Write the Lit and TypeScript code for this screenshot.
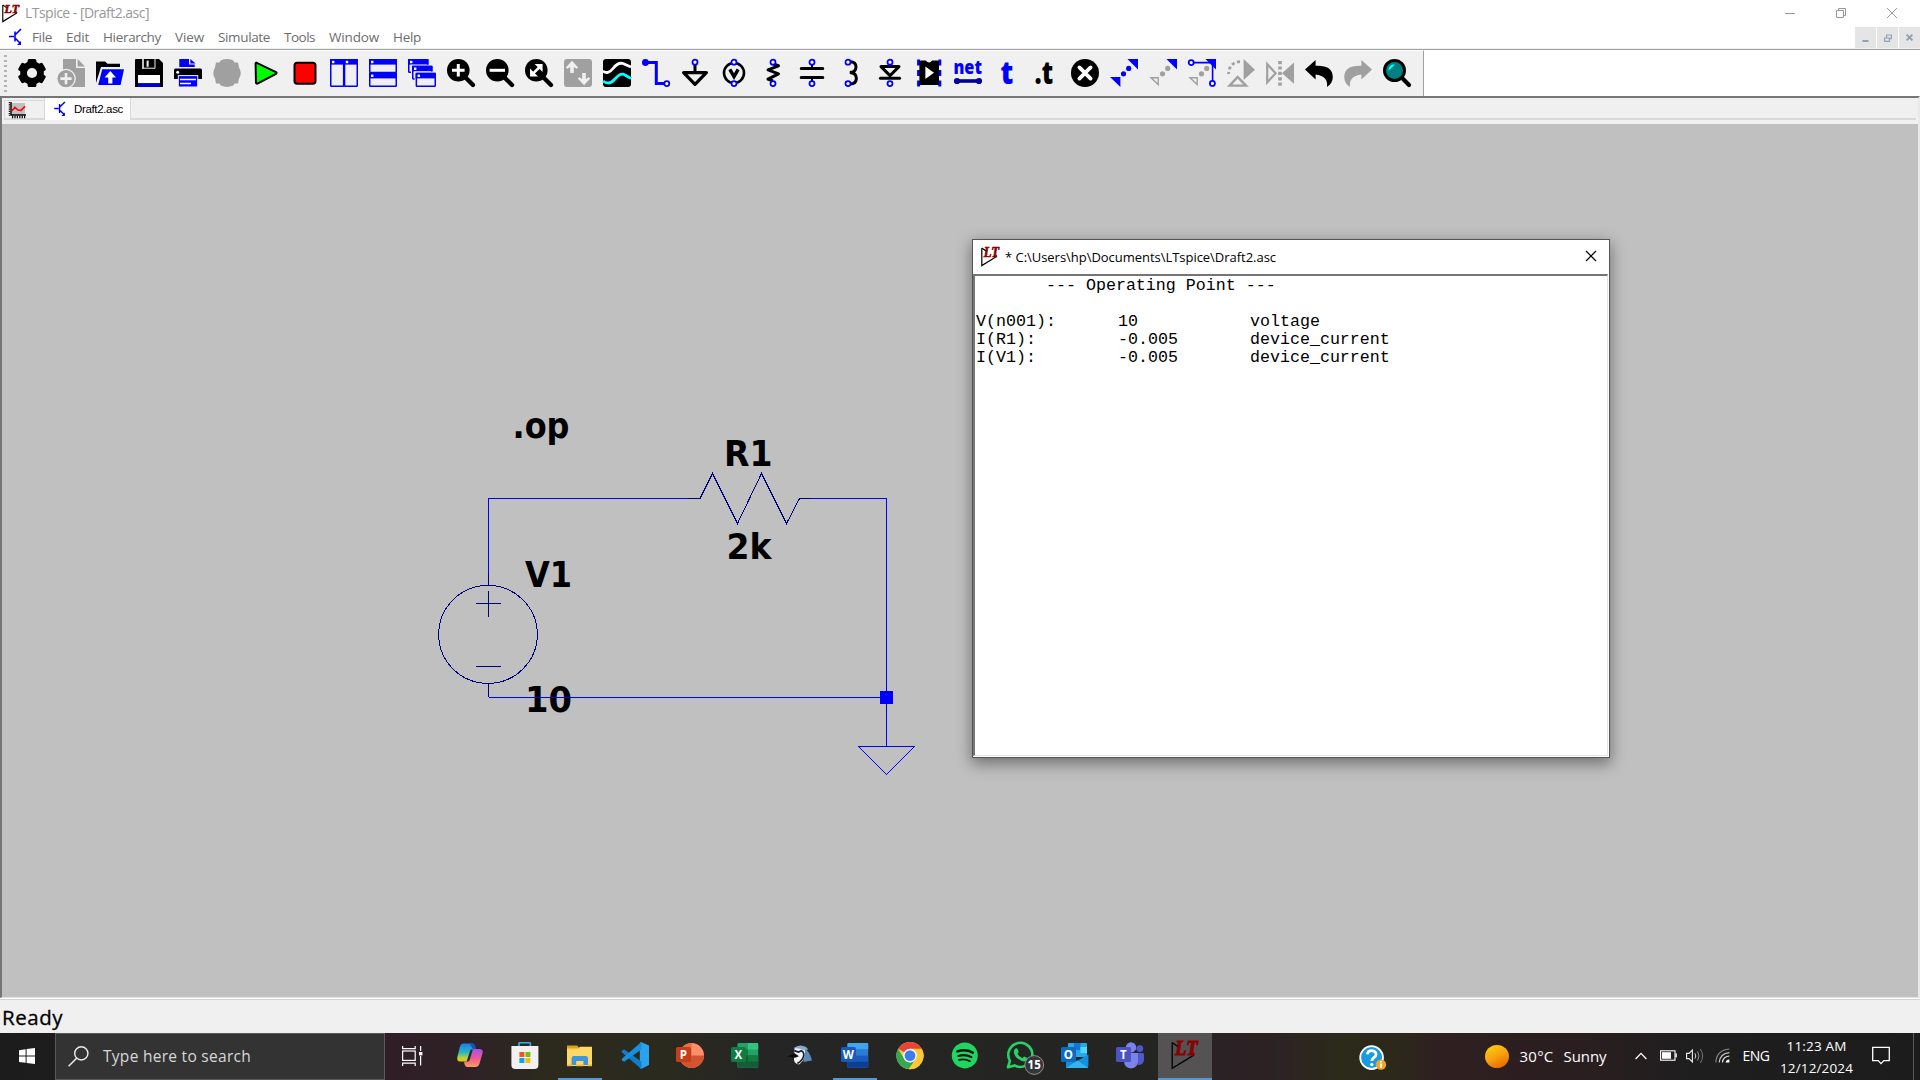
import { LitElement, html, svg, css } from "lit";
import { customElement, property, query } from "lit/decorators.js";

const BG = "#f0f0f0";
const GR = "#a0a0a0";
const BL = "#0000ff";

/** A line of text spread to a given width through letter spacing. */
@customElement("fit-label")
class FitLabel extends LitElement {
  @property() text = "";
  @property({ type: Number }) width = 0;
  @query("span") private span!: HTMLSpanElement;

  static styles = css`
    :host { display: inline-block; white-space: pre; flex: none; }
    span { display: inline-block; }
  `;

  firstUpdated() {
    const natural = this.span.getBoundingClientRect().width;
    const gap = (this.width - natural) / Math.max(1, this.text.length);
    this.span.style.letterSpacing = `${gap}px`;
    this.style.width = `${this.width}px`;
  }

  render() {
    return html`<span>${this.text}</span>`;
  }
}

const label = (text: string, width: number) =>
  html`<fit-label .text=${text} .width=${width}></fit-label>`;

const ring = (x: number, y: number) =>
  svg`<circle cx=${x} cy=${y} r="2.5" fill="#fff" stroke=${BL} stroke-width="1.8"/>`;

const lens = (inner: unknown) => svg`
  <path d="M18 18 L26 26" stroke="#000" stroke-width="4.4" stroke-linecap="round"/>
  <circle cx="11.3" cy="11.3" r="11.3"/>${inner}`;

const win = (x: number, y: number, w: number, h: number) => svg`
  <rect x=${x + 0.75} y=${y + 0.75} width=${w - 1.5} height=${h - 1.5} rx=".6" fill=${BG} stroke=${BL} stroke-width="1.5"/>
  <rect x=${x} y=${y} width=${w} height="5.6" fill=${BL}/>
  <rect x=${x + 2} y=${y + 1.8} width="2.4" height="2.4" fill="#fff"/>`;

const dots = (fill: string) => svg`
  <g fill=${fill}><circle cx="13.5" cy="14.8" r="2.6"/><circle cx="18.7" cy="9.4" r="2.6"/></g>`;

const toolIcons = [
  // control panel
  svg`<g fill="#000"><circle cx="14" cy="14" r="11.8"/>
    <rect x="9.6" y="0" width="8.8" height="28" rx="1.5"/>
    <rect x="9.6" y="0" width="8.8" height="28" rx="1.5" transform="rotate(60 14 14)"/>
    <rect x="9.6" y="0" width="8.8" height="28" rx="1.5" transform="rotate(120 14 14)"/></g>
    <circle cx="14" cy="14" r="5.1" fill=${BG}/>`,
  // new schematic
  svg`<path d="M6 0H19V9H28V28H6Z" fill=${GR}/><path d="M20.6 0L28 7.4H20.6Z" fill=${GR}/>
    <circle cx="9" cy="19.6" r="9.2" fill=${GR} stroke=${BG} stroke-width="1.3"/>
    <path d="M9 14V25.2M3.4 19.6H14.6" stroke=${BG} stroke-width="2.6"/>`,
  // open
  svg`<path d="M0 2.5H9L11.5 4.8H24V8H5L0 24Z" fill="#000"/>
    <path d="M6.2 10.2H28L24.6 26H2.2Z" fill=${BL}/>
    <path d="M14.3 12L20 18.4H16.4V24.4H12.2V18.4H8.6Z" fill="#fff"/>`,
  // save
  svg`<path d="M0 1Q0 0 1 0H24L28 4V28H0Z" fill="#000"/>
    <rect x="7.2" y="0" width="1.6" height="9.6" fill=${BG}/><rect x="11.6" y="1.6" width="2" height="6.2" fill=${BG}/>
    <path d="M7.2 9.2H20V0" fill="none" stroke=${BG} stroke-width="1"/>
    <rect x="3" y="16" width="22" height="8.4" fill="#fff"/><rect x="3" y="24.2" width="22" height="3.8" fill="#0000c8"/>`,
  // print
  svg`<path d="M5.3 0H15V5.4H20.7V8H5.3Z" fill=${BL}/><path d="M16.4 0L21.6 4.6H16.4Z" fill=${BL}/>
    <path d="M1.5 9.5H26.5Q28 9.5 28 11V20H0V11Q0 9.5 1.5 9.5Z" fill="#000"/>
    <circle cx="3.7" cy="13.2" r="1.5" fill="#fff"/>
    <rect x="4.3" y="16.6" width="19.4" height="11.4" fill=${BL} stroke=${BG} stroke-width="1"/>
    <path d="M6 20.4H22M6 24.6H17" stroke="#fff" stroke-width="1.5"/>`,
  // pause
  svg`<path d="M8 1.2Q14-1 20 1.2L21.6 3.4L25 3.6L26 8.4Q29.6 14 26 19.6L25 24.4L21.6 24.6L20 26.8Q14 29 8 26.8L6.4 24.6L3 24.4L2 19.6Q-1.6 14 2 8.4L3 3.6L6.4 3.4Z" fill=${GR}/>`,
  // run
  svg`<path d="M4.2 3.6L24 13.2Q25.2 14 24 14.8L5.4 24.6Q4.2 25 4 23.6L3.6 4.4Z" fill="#0f0" stroke="#000" stroke-width="2" stroke-linejoin="round"/>`,
  // stop
  svg`<rect x="3.5" y="3.7" width="21" height="21" rx="2.8" fill="#f00" stroke="#000" stroke-width="2"/>`,
  svg`${win(0, 0, 14.4, 28)}${win(13.8, 0, 14.2, 28)}`,
  svg`${win(0, 0, 28, 14.3)}${win(0, 13.8, 28, 14.2)}`,
  svg`${win(0, 0, 20.5, 14)}
    <rect x="3" y="5.8" width="22" height="14.6" fill=${BG}/>${win(4, 6.7, 20.5, 14)}
    <rect x="6.6" y="12.6" width="21.4" height="15.4" fill=${BG}/>${win(7.6, 13.8, 20.4, 14.2)}`,
  lens(svg`<path d="M11.3 5V17.6M5 11.3H17.6" stroke="#fff" stroke-width="3"/>`),
  lens(svg`<path d="M3.6 11.3H19" stroke="#fff" stroke-width="3"/>`),
  lens(svg`<path d="M8 14.6L14.6 8" stroke="#fff" stroke-width="2.6"/>
    <path d="M9.6 5H17.6V13ZM5 9.6V17.6H13Z" fill="#fff"/>`),
  // autorange
  svg`<rect width="28" height="28" rx="3" fill=${GR}/>
    <path d="M8 1.8L14.2 8.6L12.6 9.8L9.8 8V14H6.2V8L3.4 9.8L1.8 8.6Z" fill=${BG}/>
    <path d="M20 26.2L26.2 19.4L24.6 18.2L21.8 20V14H18.2V20L15.4 18.2L13.8 19.4Z" fill=${BG}/>`,
  // waveforms
  svg`<rect width="28" height="28" rx="3" fill="#000"/>
    <g fill="none" stroke-width="2.8"><path d="M0 12Q5 16 10 9.5T20 4.5L28 8" stroke="#fff"/>
    <path d="M0 22Q6 27 12 20T22 16L28 19.5" stroke="#0ff"/></g>`,
  // wire
  svg`<path d="M3.5 3.6H14.3V24.5H24" fill="none" stroke=${BL} stroke-width="3"/>
    <circle cx="3.4" cy="3.5" r="3.4" fill=${BL}/>${ring(24.8, 24.6)}`,
  // ground
  svg`<path d="M14 5V13" stroke="#000" stroke-width="3"/>
    <path d="M2.6 13.6H25.4L14 25.4Z" fill="none" stroke="#000" stroke-width="3.2" stroke-linejoin="round"/>${ring(14, 3.2)}`,
  // voltage source
  svg`<circle cx="14" cy="14" r="10" fill="none" stroke="#000" stroke-width="2.6"/>
    <path d="M9.8 10.3L14 17.6L18.2 10.3" fill="none" stroke="#000" stroke-width="3.4"/>${ring(14, 3.2)}${ring(14, 24.6)}`,
  // resistor
  svg`<path d="M14 5L19.5 6.8L9 10.8L19.5 14.8L9 20.2L14 22" fill="none" stroke="#000" stroke-width="3" stroke-linejoin="round"/>${ring(14, 3.2)}${ring(14, 24.6)}`,
  // capacitor
  svg`<path d="M3.2 9.6H24.8M3.2 18.4H24.8" stroke="#000" stroke-width="3" stroke-linecap="round"/>
    <path d="M14 5V9M14 19V23" stroke="#000" stroke-width="2"/>${ring(14, 3.2)}${ring(14, 24.6)}`,
  // inductor
  svg`<path d="M13 2.8Q18.8 2.6 19 8Q18.8 13.4 12.8 13.6Q19.4 14 19.4 19.6Q19 25 13 25" fill="none" stroke="#000" stroke-width="3" stroke-linecap="round"/>${ring(11, 3.2)}${ring(11, 24.6)}`,
  // diode
  svg`<path d="M5 7.6H23L14 16.6Z" fill="none" stroke="#000" stroke-width="3" stroke-linejoin="round"/>
    <path d="M4.4 19.2H23.6" stroke="#000" stroke-width="3" stroke-linecap="round"/>${ring(14, 3.2)}${ring(14, 24.6)}`,
  // component
  svg`<g fill="none" stroke=${BL} stroke-width="3" stroke-dasharray="6 4.5"><path d="M3.6 0.5V28M24.8 0.5V28"/></g>
    <path d="M6 1.5H10.8Q14 5.5 17.2 1.5H22.4Q24 1.5 24 3V26H4.4V3Q4.4 1.5 6 1.5Z" fill="#000"/>
    <path d="M10.4 7.6L19 13.8L10.4 20Z" fill="#fff"/>`,
  // net name
  svg`<text x="-.6" y="15.2" textLength="28.6" lengthAdjust="spacingAndGlyphs" font-family="Open Sans" font-weight="800" font-size="18.5" fill=${BL}>net</text>
    <path d="M3 22H25" stroke="#00009a" stroke-width="3.6"/><circle cx="3" cy="22" r="3.1" fill="#00009a"/><circle cx="25" cy="22" r="3.1" fill="#00009a"/>`,
  svg`<text x="7.4" y="25.4" textLength="12.8" lengthAdjust="spacingAndGlyphs" font-family="Open Sans" font-weight="800" font-size="31" fill=${BL}>t</text>`,
  svg`<text x="2.6" y="25.4" textLength="18.6" lengthAdjust="spacingAndGlyphs" font-family="Open Sans" font-weight="800" font-size="31">.t</text>`,
  // delete
  svg`<circle cx="14" cy="14" r="14"/><path d="M8.4 8.4L19.6 19.6M19.6 8.4L8.4 19.6" stroke="#fff" stroke-width="3.8" stroke-linecap="round"/>`,
  // duplicate
  svg`<path d="M17.4 0H28V10.6ZM0 18H10.4V28Z" fill=${BL}/>${dots(BL)}`,
  // move
  svg`<path d="M17.4 0H28V10.6Z" fill=${BL}/><path d="M2 18.7H9.2V25.6Z" fill="none" stroke=${GR} stroke-width="1.4"/>${dots(GR)}`,
  // drag
  svg`<path d="M17.4 0H28V10.6Z" fill=${BL}/><path d="M2 18.7H9.2V25.6Z" fill="none" stroke=${GR} stroke-width="1.4"/>${dots(GR)}
    <path d="M5 3.6H24.6V22" fill="none" stroke=${BL} stroke-width="1.6"/>${ring(3.2, 3.6)}${ring(24.4, 24.4)}`,
  // rotate
  svg`<path d="M16.6 0L28 10.8L16.6 21Z" fill=${GR}/><path d="M13 2.6Q2 3.4 1.6 15" fill="none" stroke=${GR} stroke-width="2.8" stroke-dasharray="3 2.6"/>
    <path d="M2.6 26.6L10.6 18L19 26.6Z" fill="none" stroke=${GR} stroke-width="2.4"/>`,
  // mirror
  svg`<path d="M28 3.6V24.8L16 14.2Z" fill=${GR}/><path d="M1.2 5V23.4L9.6 14.2Z" fill="none" stroke=${GR} stroke-width="2.2"/>
    <path d="M14 2V27" stroke=${GR} stroke-width="3.6" stroke-dasharray="3.2 2.2"/>`,
  // undo
  svg`<path d="M0 10.4L10.6 1V6.8Q27.6 6 27.8 18Q27.8 24 22 28Q23.6 17 10.6 15.4V20.4Z"/>`,
  // redo
  svg`<path d="M28 10.4L17.4 1V6.8Q.4 6 .2 18Q.2 24 6 28Q4.4 17 17.4 15.4V20.4Z" fill=${GR}/>`,
  // find
  svg`<path d="M18.6 18.6L26 26" stroke="#000" stroke-width="4.2" stroke-linecap="round"/>
    <circle cx="11.5" cy="11.5" r="10" fill="#008080" stroke="#000" stroke-width="3"/>
    <path d="M5.4 12.4Q5 5.6 11.8 5.2Q10.4 7.6 9 8.6Q6.6 10 5.4 12.4Z" fill="#0ff"/>`,
];

const ltLogo = (stroke: number) => svg`
  <path d="M1.2 1.4V27.4L22.4 14.4V11.5M1.2 1.4L7.5 6" fill="none" stroke="#000" stroke-width=${stroke}/>
  <text x="4" y="14.4" textLength="22.6" lengthAdjust="spacingAndGlyphs" font-family="Liberation Serif" font-style="italic" font-weight="700" font-size="20" fill="#8b0000" stroke="#8b0000" stroke-width=".9">LT</text>`;

const npn = svg`<path d="M0 8.5H5M6 3.5V13.5M6 7L12 1M6 10L11.5 15.5" stroke=${BL} stroke-width="1.6" fill="none"/><path d="M12 17H8L12 13Z" fill=${BL}/>`;

const office = (letter: string, plate: string, back: unknown) => svg`${back}
  <rect x="0" y="6" width="15" height="15" rx="1.5" fill=${plate}/>
  <text x="7.4" y="17.6" text-anchor="middle" font-family="Open Sans" font-weight="700" font-size="11.5" fill="#fff">${letter}</text>`;

const taskIcons: { icon: unknown; open?: boolean; active?: boolean }[] = [
  { icon: svg`<defs>
      <linearGradient id="c1" x1="0" y1="0" x2="0" y2="1"><stop offset="0" stop-color="#1a7fe8"/><stop offset=".5" stop-color="#2bb6c4"/><stop offset=".8" stop-color="#b9d531"/><stop offset="1" stop-color="#f3c21b"/></linearGradient>
      <linearGradient id="c2" x1="0" y1="0" x2="0" y2="1"><stop offset="0" stop-color="#a353ea"/><stop offset=".5" stop-color="#f0569a"/><stop offset="1" stop-color="#fb9e55"/></linearGradient></defs>
    <path d="M7 2.5H16Q19 2.5 18 6L14 18Q13 20.5 10.5 20.5H4Q.6 20.5 1.4 16L4 5.4Q4.8 2.5 7 2.5Z" fill="url(#c1)"/>
    <path d="M13.5 2.5H17Q19.4 2.8 20 8H17Z" fill="#1b4fb8"/>
    <path d="M18 8H24Q27.4 8.4 26.6 12L23.4 23Q22.4 26 19.4 26H11Q8.6 25.6 8 20.5H11Q13.4 20.4 14 18L16.4 10Q17 8.2 18 8Z" fill="url(#c2)"/>
    <path d="M14.6 8.6H16.8L13.6 19Q12.8 20.8 10.6 20.6Z" fill="#2b2526"/>` },
  { icon: svg`<path d="M8 6V2.4Q8 1.8 8.6 1.8H18.6Q19.4 1.8 19.4 2.4V6" fill="none" stroke="#2cb4e8" stroke-width="1.6"/>
    <path d="M.4 5H27.4V24Q27.4 28 23.4 28H4.4Q.4 28 .4 24Z" fill="#f1f1f1"/>
    <rect x="8.4" y="11" width="5" height="5" fill="#f35325"/><rect x="14.4" y="11" width="5" height="5" fill="#81bc06"/>
    <rect x="8.4" y="17" width="5" height="5" fill="#05a6f0"/><rect x="14.4" y="17" width="5" height="5" fill="#ffba08"/>` },
  { open: true, icon: svg`<path d="M1 4.6H11L13 6.4V9H1Z" fill="#e3a20c"/><path d="M1 7.6H12L14 5.8H26V25H1Z" fill="#ffd767"/>
    <path d="M5.6 24V17.4Q5.6 15 8 15H19.4Q22 15 22 17.4V24H17.4V20H10.2V24Z" fill="#3d95dc"/><path d="M1 23.6H5.6V25.2H1ZM10.2 23.6H17.4V25.2H10.2ZM22 23.6H26V25.2H22Z" fill="#f4b93a"/>` },
  { icon: svg`<path d="M20 1L28 4.4V24L20 28L18.8 27V2Z" fill="#29a3ee"/><path d="M1 9.4L3.2 8.4L20.4 20.4V28L.8 11.2Z" fill="#0f7fcc"/>
    <path d="M1 19.6L3.2 20.8L20.4 8.4V1L.8 17.8Z" fill="#1a8ddb"/>` },
  { icon: office("P", "#c43e1c", svg`<circle cx="15.6" cy="14.4" r="12.4" fill="#ff8f6b"/><path d="M15.6 2A12.4 12.4 0 0 0 3.2 14.4H15.6Z" fill="#ed6c47"/><path d="M3.2 14.4A12.4 12.4 0 0 0 28 14.4Z" fill="#d35230"/>`) },
  { icon: office("X", "#107c41", svg`<rect x="6.4" y="2" width="20.8" height="24.8" rx="1.4" fill="#21a366"/><path d="M17 2H26Q27.2 2 27.2 3.4V8.4H17Z" fill="#33c481"/><path d="M6.4 8.4H17V14.6H6.4Z" fill="#107c41"/><path d="M6.4 14.6H27.2V25.4Q27.2 26.8 25.8 26.8H7.8Q6.4 26.8 6.4 25.4Z" fill="#185c37"/><path d="M17 14.6H27.2V20.6H17Z" fill="#107c41"/>`) },
  { icon: svg`<path d="M17 6Q24 10 26 19.6L17.6 21Z" fill="#5b89b5"/><path d="M8.6 6.6L17 5.4Q20 9 18.6 15Q17.6 20 13 23.6Q8.6 22.6 8 19Z" fill="#f2f4f6"/>
    <path d="M1 15.4L8.6 12.2L13 15.2L9 16.8Z" fill="#0c0c0c"/><path d="M8.4 9.6L12.4 11L15.4 9.8Q19.6 12 16.6 17.6Q15 20.4 11.4 22.6" fill="none" stroke="#16202c" stroke-width="1.7"/><path d="M7.6 7.4Q13 2.4 20 6L22.4 8.6L17.4 9Q13 6.8 7.6 7.4Z" fill="#86abd0"/>` },
  { open: true, icon: office("W", "#185abd", svg`<rect x="6.4" y="2" width="20.8" height="24.8" rx="1.4" fill="#2b7cd3"/><path d="M6.4 8.2V3.4Q6.4 2 7.8 2H25.8Q27.2 2 27.2 3.4V8.2Z" fill="#41a5ee"/><path d="M6.4 14.6H27.2V20.6H6.4Z" fill="#185abd"/><path d="M6.4 20.6H27.2V25.4Q27.2 26.8 25.8 26.8H7.8Q6.4 26.8 6.4 25.4Z" fill="#103f91"/>`) },
  { icon: svg`<circle cx="14" cy="14.6" r="13.6" fill="#fc4"/><path d="M14 14.6L2.2 7.8A13.6 13.6 0 0 1 25.8 7.8H14Z" fill="#ea4335"/>
    <path d="M2.2 7.8A13.6 13.6 0 0 0 12.6 28.1L19.6 18.2L14 20.6L8.4 18.2Z" fill="#34a853"/><path d="M25.8 8H14V15L20 18L13.4 28.2A13.6 13.6 0 0 0 25.8 8Z" fill="#fcc934"/>
    <circle cx="14" cy="14.6" r="6.8" fill="#fff"/><circle cx="14" cy="14.6" r="5.4" fill="#3b7ded"/>` },
  { icon: svg`<circle cx="13.8" cy="14.4" r="13" fill="#1ed760"/><g fill="none" stroke="#111" stroke-linecap="round"><path d="M6.4 10.4Q14.6 7.8 21.8 11.6" stroke-width="2.5"/><path d="M7.4 14.9Q14.4 12.8 20.4 16.1" stroke-width="2.1"/><path d="M8 18.9Q14 17.4 19 20.2" stroke-width="1.7"/></g>` },
  { icon: svg`<path d="M2 26.2L3.9 19.8A12 12 0 1 1 8.6 24.4Z" fill="none" stroke="#25d366" stroke-width="2.6" stroke-linejoin="round"/>
    <path d="M9.4 7.6Q10.4 6.8 11.4 7.8L12.6 10.6Q12.8 11.6 11.4 12.8Q13.2 16 16.4 17.2L18 15.4L21 16.8Q22 17.2 21.2 18.8Q19.4 21.4 15.8 20Q9.8 17.8 8 12.4Q7.4 9.4 9.4 7.6Z" fill="#25d366"/>
    <circle cx="28.2" cy="24" r="9.4" fill="#34363a" stroke="#9a9a9a" stroke-width=".9"/>
    <text x="28.2" y="28.3" text-anchor="middle" font-family="Open Sans" font-weight="700" font-size="11.5" fill="#fff">15</text>` },
  { icon: office("O", "#0f6cbd", svg`<path d="M7 3Q7 2 8 2H25Q26 2 26 3V16H7Z" fill="#28a8ea"/><rect x="13" y="2" width="6.5" height="7" fill="#0f78d4"/><rect x="19.5" y="6" width="6.5" height="6" fill="#50d9ff"/><path d="M5 14L16 20L27.4 13.4V25Q27.4 27 25.4 27H5Z" fill="#1490df"/><path d="M5 27L16.5 19.6L27.4 27Z" fill="#35b2f0"/>`) },
  { icon: office("T", "#4b53bc", svg`<circle cx="15" cy="6.4" r="5.2" fill="#7b83eb"/><circle cx="23.8" cy="7.6" r="3.4" fill="#5059c9"/><path d="M19 12H26.6Q28 12 28 13.4V19Q27.6 24 22 24Z" fill="#5059c9"/><path d="M8 12H22V20Q22 27 15 27.4Q8 27 8 20Z" fill="#7b83eb"/>`) },
  { active: true, icon: ltLogo(1.3) },
];

const menus: [string, number, number][] = [
  ["File", 20, 14], ["Edit", 23, 14], ["Hierarchy", 58, 14], ["View", 29, 14],
  ["Simulate", 52, 14], ["Tools", 31, 14], ["Window", 50, 14], ["Help", 28, 0],
];

const results = [
  ["V(n001):", "10", "voltage"],
  ["I(R1):", "-0.005", "device_current"],
  ["I(V1):", "-0.005", "device_current"],
];

@customElement("spice-schematic")
class SpiceSchematic extends LitElement {
  static styles = css`
    :host { display: block; }
    svg { display: block; }
    .wire { stroke: #0000ff; fill: none; shape-rendering: crispEdges; }
    .part { stroke: #000080; fill: none; shape-rendering: crispEdges; }
    text { font: 700 35px "DejaVu Sans Condensed", "DejaVu Sans", sans-serif; font-stretch: condensed; }
  `;

  render() {
    const t = (s: string, x: number, y: number, w: number) =>
      svg`<text x=${x} y=${y} textLength=${w} lengthAdjust="spacingAndGlyphs">${s}</text>`;
    return html`<svg width="1916" height="873" viewBox="2 124 1916 873">
      ${t(".op", 512.5, 437.5, 57)}${t("R1", 724, 466, 48.5)}${t("2k", 726.5, 559, 45)}
      ${t("V1", 525, 587, 47)}${t("10", 525, 712, 47)}
      <path class="wire" d="M488.5 574V498.5H688M811 498.5H886.5V746M488.5 697.5H886.5M858.5 746.5H914.5L886.5 774.5Z" />
      <path class="part" d="M688 498.5H700L712.5 473.5L737.5 523.5L761.5 473.5L786.5 523.5L799.5 498.5H811
        M488.5 573V585M488.5 684V697M488.5 591V617M476 603.5H501M476 666.5H501" />
      <ellipse class="part" cx="488" cy="634.4" rx="49.3" ry="49" />
      <rect x="880" y="691" width="13" height="13" fill="#0000ff" />
    </svg>`;
  }
}

@customElement("result-window")
class ResultWindow extends LitElement {
  static styles = css`
    :host {
      box-sizing: border-box; display: flex; flex-direction: column; background: #fff;
      border: 1px solid #555; box-shadow: 0 5px 14px 1px rgba(0, 0, 0, 0.4);
      font-family: "Open Sans", "Noto Sans", sans-serif;
    }
    svg { display: block; overflow: visible; }
    .title { display: flex; align-items: center; height: 34px; padding: 0 12px 0 8px; font-size: 13px; color: #000; }
    .title svg { margin-top: -2px; }
    .title fit-label { margin-left: 5px; }
    .grow { flex: 1; }
    .body {
      flex: 1; box-sizing: border-box; margin-right: 1px; margin-bottom: 1px; padding: 1px 0 0 1px;
      border: 1px solid #e3e3e3; border-top: 2px solid #757575; border-left: 2px solid #757575;
      font: 16.65px/18px "Liberation Mono", monospace; color: #000; white-space: pre;
    }
    .head { padding-left: 70px; height: 36px; }
    .row { display: grid; grid-template-columns: 142px 132px 1fr; height: 18px; }
  `;

  render() {
    return html`
      <div class="title">
        <svg width="19" height="19" viewBox="0 0 28 28">${ltLogo(1.8)}</svg>
        ${label("* C:\\Users\\hp\\Documents\\LTspice\\Draft2.asc", 271)}
        <span class="grow"></span>
        <svg width="12" height="12" viewBox="0 0 12 12"><path d="M1 1L11 11M11 1L1 11" stroke="#000" stroke-width="1.2" /></svg>
      </div>
      <div class="body"><div class="head">--- Operating Point ---</div>${results.map(
        (r) => html`<div class="row">${r.map((c) => html`<span>${c}</span>`)}</div>`
      )}</div>
    `;
  }
}

@customElement("task-bar")
class TaskBar extends LitElement {
  static styles = css`
    :host {
      display: flex; height: 47px; color: #fff; font: 15px "Open Sans", "Noto Sans", sans-serif;
      background: linear-gradient(90deg, #1c1c1c 0, #202020 300px, #301d26 385px, #2e2226 470px, #2b2a1d 550px, #2b2a1e 660px,
        #252525 760px, #242422 1160px, #2b2225 1220px, #2c2224 1270px, #2c2a1b 1340px, #2c281c 1400px, #2f1f20 1440px,
        #2a1e20 1580px, #1e1e1e 1700px, #1c1c1c 1920px);
    }
    svg { display: block; overflow: visible; flex: none; }
    .start { width: 55px; display: flex; align-items: center; justify-content: center; padding: 0 1px 2px 0; box-sizing: border-box; }
    .search {
      box-sizing: border-box; width: 330px; display: flex; align-items: center; padding: 0 0 1px 12px; gap: 14px;
      background: #333; border: 1px solid #5a5a5a; color: #d8d8d8; font-size: 15.5px;
    }
    .view { width: 57px; display: flex; align-items: center; padding: 0 0 2px 17px; box-sizing: border-box; }
    .apps { display: flex; }
    .app { box-sizing: border-box; width: 55px; padding: 8px 13.5px 0; border-bottom: 2px solid transparent; background-clip: padding-box; }
    .open { margin: 0 5.5px; width: 44px; padding: 8px 8px 0; border-bottom-color: #5698cf; }
    .active { width: 54px; margin-left: .5px; background: #545252; border-bottom-color: #5698cf; }
    .help { margin-left: 147px; padding-top: 12px; }
    .sun { margin: 12px 11px 0 99px; width: 24px; height: 23px; border-radius: 50%; background: linear-gradient(155deg, #ffd60a, #f8a010 50%, #e35a00); }
    .weather { display: flex; gap: 10px; padding-top: 13px; }
    .tray { display: flex; align-items: center; margin-left: 28px; padding-bottom: 2px; }
    .tray .battery { margin-left: 13px; }
    .tray .sound { margin-left: 9px; }
    .tray .wifi { margin-left: 10px; }
    .eng { margin-left: 13px; font-size: 14px; }
    .clock { display: flex; flex-direction: column; align-items: center; margin-left: 11px; width: 72px; font-size: 13.5px; line-height: 22px; padding-top: 2px; }
    .note { margin: 13px 0 0 19px; }
    .peek { margin-left: 23px; border-left: 1px solid #5a5a5a; height: 47px; }
  `;

  render() {
    return html`
      <div class="start"><svg width="16" height="16" viewBox="0 0 16 16"><path d="M0 2.2L6.6 1.3V7.6H0ZM7.6 1.1L16 0V7.6H7.6ZM0 8.5H6.6V14.8L0 13.9ZM7.6 8.5H16V16L7.6 14.9Z" fill="#fff" /></svg></div>
      <div class="search">
        <svg width="21" height="21" viewBox="0 0 21 21"><circle cx="13.3" cy="7.4" r="6.6" fill="none" stroke="#eee" stroke-width="1.4" /><path d="M8.6 12.2L.6 20.2" stroke="#eee" stroke-width="1.5" /></svg>
        ${label("Type here to search", 148)}
      </div>
      <div class="view"><svg width="21" height="20" viewBox="0 0 21 20"><g fill="none" stroke="#fff" stroke-width="1.2"><rect x=".6" y="5" width="12.6" height="9.4" /><path d="M.6 0V2.6H13.2V0M.6 20V17.2H13.2V20M18.6 0V5M18.6 10V19.6" /></g><rect x="17" y="6" width="3.4" height="3.4" fill="#fff" /></svg></div>
      <div class="apps">${taskIcons.map(
        (a) => html`<div class="app ${a.open ? "open" : ""} ${a.active ? "active" : ""}"><svg width="28" height="28" viewBox="0 0 28 28">${a.icon}</svg></div>`
      )}</div>
      <div class="help"><svg width="27" height="26" viewBox="0 0 27 26"><circle cx="12.6" cy="12.6" r="11.4" fill="#1a9be0" stroke="#fff" stroke-width="1.8" />
        <path d="M8.4 9.4Q8.6 5.6 12.8 5.6Q17 5.8 17 9.4Q17 11.4 14.6 12.8Q12.8 14 12.8 16" fill="none" stroke="#fff" stroke-width="2.8" /><circle cx="12.8" cy="19.6" r="1.7" fill="#fff" />
        <circle cx="22" cy="19.6" r="5.2" fill="#efa52b" /><path d="M22 18.6V23M22 16V17.4" stroke="#fff" stroke-width="1.7" /></svg></div>
      <div class="sun"></div>
      <div class="weather">${label("30°C", 34)}${label("Sunny", 43)}</div>
      <div class="tray">
        <svg width="12" height="8" viewBox="0 0 12 8"><path d="M.6 7L6 1.4L11.4 7" fill="none" stroke="#fff" stroke-width="1.3" /></svg>
        <svg class="battery" width="17" height="11" viewBox="0 0 17 11"><rect x=".6" y=".8" width="14.4" height="9.4" fill="none" stroke="#fff" stroke-width="1.1" /><rect x="2" y="2.2" width="9" height="6.6" fill="#fff" /><rect x="15.4" y="3.4" width="1.4" height="4" fill="#fff" /></svg>
        <svg class="sound" width="19" height="16" viewBox="0 0 19 16"><path d="M.6 5.4H3L6.4 2V14L3 10.6H.6Z" fill="none" stroke="#eee" stroke-width="1.1" /><g fill="none"><path d="M9 5.4Q10.6 8 9 10.6" stroke="#ddd" /><path d="M11.6 3.4Q14.4 8 11.6 12.6" stroke="#999" /><path d="M14.4 1Q18.8 8 14.4 15" stroke="#777" /></g></svg>
        <svg class="wifi" width="15" height="15" viewBox="0 0 15 15"><g fill="none" stroke-width="1.2"><path d="M.8 14.4Q1.6 2 14.4 1" stroke="#888" /><path d="M4.2 14.4Q5 5.4 14.4 4.6" stroke="#ccc" /><path d="M7.4 14.4Q8 8.6 14.4 8" stroke="#eee" /></g><path d="M10.6 14.6Q10.8 11.8 14.4 11.4V14.6Z" fill="#fff" /></svg>
        <span class="eng">${label("ENG", 27)}</span>
      </div>
      <div class="clock">${label("11:23 AM", 60)}${label("12/12/2024", 73)}</div>
      <div class="note"><svg width="18" height="19" viewBox="0 0 18 19"><path d="M.7 1.3H17.3V14.6H11.8L9 17.6L6.2 14.6H.7Z" fill="none" stroke="#fff" stroke-width="1.3" /></svg></div>
      <div class="peek"></div>
    `;
  }
}

@customElement("app-root")
class AppRoot extends LitElement {
  static styles = css`
    :host {
      display: flex; flex-direction: column; position: relative; width: 1920px; height: 1080px; overflow: hidden;
      background: #fff; font-family: "Open Sans", "Noto Sans", sans-serif;
    }
    svg { display: block; flex: none; overflow: visible; }
    .title { display: flex; align-items: center; box-sizing: border-box; height: 26px; padding: 0 23px 1px 2px; font-size: 14px; color: #999; }
    .title fit-label { margin-left: 5px; }
    .grow { flex: 1; }
    .winbtns { display: flex; align-items: center; gap: 41px; }
    .menu { display: flex; align-items: center; height: 23px; padding-left: 9px; font-size: 13.5px; color: #6d6d6d; box-sizing: border-box; border-bottom: 1px solid #f0f0f0; }
    .menu .items { display: flex; margin-left: 10px; padding-bottom: 1px; }
    .mdi { display: flex; gap: 1px; align-self: flex-end; }
    .mdi span { width: 21px; height: 21px; background: #e5e5e5; display: flex; align-items: center; justify-content: center; }
    .tools { display: flex; height: 47px; box-sizing: border-box; border-top: 1px solid #a0a0a0; }
    .strip { box-sizing: border-box; width: 1424px; display: flex; padding: 8px 0 0 4px; background: #f0f0f0; border-right: 1px solid #a0a0a0; border-top: 1px solid #fff; }
    .grip { width: 3px; height: 38px; margin: -4px 11px 0 0; background: repeating-linear-gradient(#b4b4b4 0 2px, #f0f0f0 2px 5px); }
    .icons { display: flex; gap: 11px; }
    .frame {
      box-sizing: border-box; flex: 1; display: flex; flex-direction: column; background: #c0c0c0;
      border-left: 2px solid #757575; border-top: 2px solid #757575; border-right: 2px solid #e9e9e9; border-bottom: 1px solid #e3e3e3;
    }
    .tabs { height: 26px; display: flex; background: #f0f0f0; padding: 0 2px; }
    .rule { flex: 1; height: 20px; border-bottom: 2px solid #d9d9d9; }
    .tab { box-sizing: border-box; width: 40px; height: 20px; margin-top: 2px; border: 1px solid #d9d9d9; border-right: 0; border-bottom-width: 2px; padding: 1px 0 0 4px; }
    .tab.on { width: 87px; height: 22px; margin-top: 0; padding: 3px 0 0 9px; display: flex; gap: 8px; background: #fff; border-width: 0 1px 0 1px; border-right: 1px solid #d9d9d9; font: 11.5px "Liberation Sans", sans-serif; color: #000; }
    .tab.on fit-label { margin-top: 2px; }
    .status { height: 34px; box-sizing: border-box; margin-top: 1px; border-top: 1px solid #d4d4d4; background: #f0f0f0; padding: 3px 0 0 2px; font-size: 20.5px; line-height: 29px; font-weight: 500; color: #000; -webkit-text-stroke: .3px #000; }
    result-window { position: absolute; left: 972px; top: 239px; width: 638px; height: 519px; }
  `;

  render() {
    return html`
      <div class="title">
        <svg width="18" height="18" viewBox="0 0 28 28">${ltLogo(1.8)}</svg>
        ${label("LTspice - [Draft2.asc]", 124)}
        <span class="grow"></span>
        <div class="winbtns">
          <svg width="10" height="10" viewBox="0 0 10 10"><path d="M0 5.5H10" stroke="#999" /></svg>
          <svg width="10" height="10" viewBox="0 0 10 10"><path d="M.5 2.5H7.5V9.5H.5ZM2.5 2.5V.5H9.5V7.5H7.5" fill="none" stroke="#999" /></svg>
          <svg width="10" height="10" viewBox="0 0 10 10"><path d="M0 0L10 10M10 0L0 10" stroke="#999" /></svg>
        </div>
      </div>
      <div class="menu">
        <svg width="13" height="18" viewBox="0 0 13 18">${npn}</svg>
        <div class="items">${menus.map(([m, w, gap]) => html`${label(m, w)}<span style="width:${gap}px"></span>`)}</div>
        <span class="grow"></span>
        <div class="mdi">
          <span><svg width="7" height="10" viewBox="0 0 7 10"><path d="M.5 8H6.5" stroke="#93a1b5" stroke-width="2" /></svg></span>
          <span><svg width="8" height="8" viewBox="0 0 8 8"><path d="M.6 4H5.4V7.4H.6ZM2.6 3.6V1H7.4V4.6H6" fill="none" stroke="#93a1b5" stroke-width="1.2" /></svg></span>
          <span><svg width="7" height="7" viewBox="0 0 7 7"><path d="M.6 .6L6.4 6.4M6.4 .6L.6 6.4" stroke="#93a1b5" stroke-width="2" /></svg></span>
        </div>
      </div>
      <div class="tools">
        <div class="strip">
          <div class="grip"></div>
          <div class="icons">${toolIcons.map((i) => html`<svg width="28" height="28" viewBox="0 0 28 28">${i}</svg>`)}</div>
        </div>
      </div>
      <div class="frame">
        <div class="tabs">
          <div class="tab"><svg width="17" height="17" viewBox="0 0 17 17"><rect x="2" y="1" width="14" height="12" fill="#c0c0c0" /><path d="M2 0V13H17" stroke="#000" stroke-width="1.4" fill="none" /><path d="M.5 0V14" stroke="#000" stroke-width="1.5" stroke-dasharray="1.2 1" /><path d="M3 15H17" stroke="#000" stroke-width="2.4" stroke-dasharray="1.2 1.2" /><path d="M2.6 9L6 5.4L9 8L12 8.4L16 4.4" fill="none" stroke="#f00" stroke-width="1.6" /></svg></div>
          <div class="tab on"><svg width="12" height="16" viewBox="0 0 13 18">${npn}</svg>${label("Draft2.asc", 49)}</div>
          <div class="rule"></div>
        </div>
        <spice-schematic></spice-schematic>
      </div>
      <div class="status">${label("Ready", 61)}</div>
      <task-bar></task-bar>
      <result-window></result-window>
    `;
  }
}
